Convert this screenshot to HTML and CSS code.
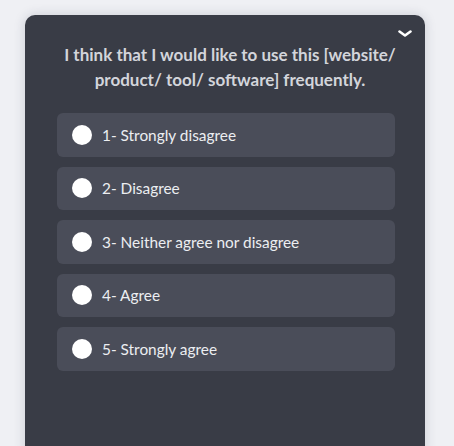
FILE: index.html
```html
<!DOCTYPE html>
<html>
<head>
<meta charset="utf-8">
<link rel="stylesheet" href="styles.css">
</head>
<body>
<div class="page">
  <div class="panel">
    <button class="collapse" aria-label="Collapse">
      <svg width="14" height="8" viewBox="0 0 14 8"><path d="M1.5 1.5 L7 5.5 L12.5 1.5" fill="none" stroke="#fff" stroke-width="2.6" stroke-linecap="round" stroke-linejoin="round"/></svg>
    </button>
    <h1 class="question">I think that I would like to use this [website/ product/ tool/ software] frequently.</h1>
    <div class="options">
      <label class="option"><span class="radio"></span><span class="label">1- Strongly disagree</span></label>
      <label class="option"><span class="radio"></span><span class="label">2- Disagree</span></label>
      <label class="option"><span class="radio"></span><span class="label">3- Neither agree nor disagree</span></label>
      <label class="option"><span class="radio"></span><span class="label">4- Agree</span></label>
      <label class="option"><span class="radio"></span><span class="label">5- Strongly agree</span></label>
    </div>
  </div>
</div>
</body>
</html>
```
FILE: styles.css
```css
* { box-sizing: border-box; }
html, body { margin: 0; padding: 0; }
body {
  background: #eff0f4;
  font-family: "Lato", "Open Sans", sans-serif;
  width: 454px;
  height: 446px;
  overflow: hidden;
}
.page {
  padding: 15px 29px 0 25px;
}
.panel {
  position: relative;
  width: 400px;
  height: 440px;
  background: #393c46;
  border-radius: 10px 10px 0 0;
  box-shadow: 0 0 12px rgba(40, 45, 70, 0.18);
  padding: 27px 30px 0 32px;
}
.collapse {
  position: absolute;
  top: 15px;
  right: 13px;
  background: none;
  border: 0;
  padding: 0;
  line-height: 0;
}
.question {
  margin: 0 -16px 0 -8px;
  font-size: 17px;
  font-weight: 700;
  line-height: 25px;
  color: #d3d5db;
  text-align: center;
}
.options {
  display: flex;
  flex-direction: column;
  gap: 10px;
  margin-top: 21px;
}
.option {
  display: flex;
  align-items: center;
  gap: 10px;
  height: 43.5px;
  padding: 0 15px;
  background: #4a4d59;
  border-radius: 6px;
}
.radio {
  width: 20px;
  height: 20px;
  border-radius: 50%;
  background: #fff;
  flex: none;
}
.label {
  color: #eceef1;
  font-size: 15.4px;
}
```
